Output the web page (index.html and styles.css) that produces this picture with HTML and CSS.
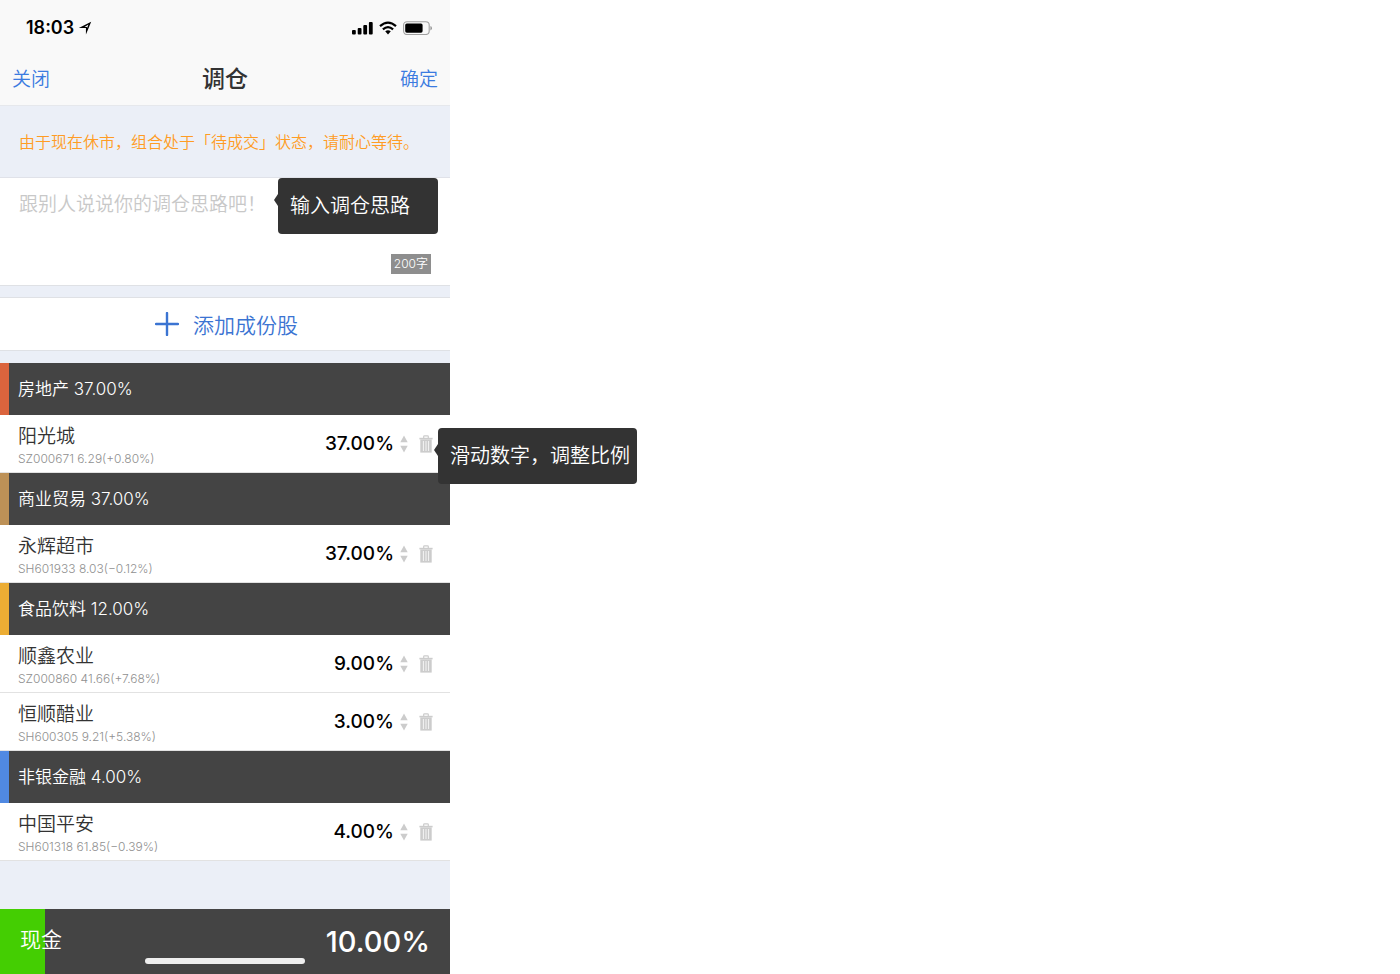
FILE: index.html
```html
<!DOCTYPE html>
<html lang="zh-CN">
<head>
  <meta charset="UTF-8">
  <meta name="viewport" content="width=device-width, initial-scale=1">
  <title>调仓</title>
  <link rel="stylesheet" href="styles.css">
</head>
<body>
  <!-- 图标 -->
  <svg class="symbols" aria-hidden="true">
    <symbol id="icon-sort" viewBox="0 0 8 18">
      <path d="M4 0.5L7.7 7.2H0.3zM4 17.5L0.3 10.8H7.7z" fill="#ccc"/>
    </symbol>
    <symbol id="icon-trash" viewBox="0 0 14 18">
      <path d="M4.7 3V1.6Q4.7 0.8 5.5 0.8H8.5Q9.3 0.8 9.3 1.6V3" fill="none" stroke="#ccc" stroke-width="1.2"/>
      <path d="M0.4 2.8H13.6V4.4H0.4z" fill="#ccc"/>
      <path d="M1.3 4.4H12.7V17.6H1.3z" fill="#ccc"/>
      <path d="M4.4 6V16M7 6V16M9.6 6V16" stroke="#fff" stroke-width="0.8"/>
    </symbol>
  </svg>

  <main class="phone">
    <header class="top">
      <div class="status">
        <span class="time">18:03</span>
        <svg width="14" height="14" viewBox="0 0 12 12" aria-hidden="true">
          <path d="M11.3 0.7L6.8 11.6V6.1H0.7z" fill="#000"/>
          <path d="M8.9 3.1L7.7 6.3V5.1H5.6z" fill="#f9f9f9"/>
        </svg>
        <div class="status-icons" aria-hidden="true">
          <svg width="21" height="14" viewBox="0 0 21 14">
            <rect x="0" y="9" width="3.8" height="4.5" rx="1"/>
            <rect x="5.7" y="7" width="3.8" height="6.5" rx="1"/>
            <rect x="11.3" y="4" width="3.8" height="9.5" rx="1"/>
            <rect x="16.9" y="1" width="3.8" height="12.5" rx="1"/>
          </svg>
          <svg width="18" height="14" viewBox="0 0 18 14">
            <path d="M1 5.2Q9 -1.8 17 5.2M3.9 8.4Q9 3.9 14.1 8.4" fill="none" stroke="#000" stroke-width="2.2"/>
            <path d="M6.2 10.3Q9 8.3 11.8 10.3L9 13.5z"/>
          </svg>
          <svg width="30" height="14" viewBox="0 0 30 14">
            <rect x="0.6" y="0.7" width="25.6" height="12.8" rx="3.4" fill="none" stroke="#a0a0a0" stroke-width="1.1"/>
            <rect x="2.2" y="2.5" width="17.4" height="9.2" rx="1.6"/>
            <path d="M27.4 5V9.4Q29 8.8 29 7.2Q29 5.6 27.4 5z" fill="#999"/>
          </svg>
        </div>
      </div>
      <div class="nav">
        <button type="button" class="nav-btn">关闭</button>
        <h1>调仓</h1>
        <button type="button" class="nav-btn nav-ok">确定</button>
      </div>
    </header>

    <p class="notice">由于现在休市，组合处于「待成交」状态，请耐心等待。</p>

    <section class="idea">
      <textarea class="idea-text" aria-label="调仓思路" placeholder="跟别人说说你的调仓思路吧！"></textarea>
      <span class="count">200字</span>
      <div class="tip tip-idea">输入调仓思路</div>
    </section>

    <button type="button" class="add">
      <svg width="24" height="24" viewBox="0 0 24 24" aria-hidden="true">
        <path d="M12 1V23M1 12H23" stroke="#3b74d2" stroke-width="2.4" stroke-linecap="round"/>
      </svg>
      添加成份股
    </button>

    <section class="group">
      <h2 class="estate">房地产 37.00%</h2>
      <div class="stock">
        <div class="info">
          <label class="name" for="sz000671">阳光城</label>
          <div class="quote">SZ000671 6.29(+0.80%)</div>
        </div>
        <input class="weight" id="sz000671" type="text" value="37.00%">
        <svg class="sort" aria-hidden="true"><use href="#icon-sort"/></svg>
        <button type="button" class="remove" aria-label="删除"><svg class="trash"><use href="#icon-trash"/></svg></button>
        <div class="tip tip-weight">滑动数字，调整比例</div>
      </div>
    </section>

    <section class="group">
      <h2 class="trade">商业贸易 37.00%</h2>
      <div class="stock">
        <div class="info">
          <label class="name" for="sh601933">永辉超市</label>
          <div class="quote">SH601933 8.03(−0.12%)</div>
        </div>
        <input class="weight" id="sh601933" type="text" value="37.00%">
        <svg class="sort" aria-hidden="true"><use href="#icon-sort"/></svg>
        <button type="button" class="remove" aria-label="删除"><svg class="trash"><use href="#icon-trash"/></svg></button>
      </div>
    </section>

    <section class="group">
      <h2 class="food">食品饮料 12.00%</h2>
      <div class="stock">
        <div class="info">
          <label class="name" for="sz000860">顺鑫农业</label>
          <div class="quote">SZ000860 41.66(+7.68%)</div>
        </div>
        <input class="weight" id="sz000860" type="text" value="9.00%">
        <svg class="sort" aria-hidden="true"><use href="#icon-sort"/></svg>
        <button type="button" class="remove" aria-label="删除"><svg class="trash"><use href="#icon-trash"/></svg></button>
      </div>
      <div class="stock">
        <div class="info">
          <label class="name" for="sh600305">恒顺醋业</label>
          <div class="quote">SH600305 9.21(+5.38%)</div>
        </div>
        <input class="weight" id="sh600305" type="text" value="3.00%">
        <svg class="sort" aria-hidden="true"><use href="#icon-sort"/></svg>
        <button type="button" class="remove" aria-label="删除"><svg class="trash"><use href="#icon-trash"/></svg></button>
      </div>
    </section>

    <section class="group">
      <h2 class="finance">非银金融 4.00%</h2>
      <div class="stock">
        <div class="info">
          <label class="name" for="sh601318">中国平安</label>
          <div class="quote">SH601318 61.85(−0.39%)</div>
        </div>
        <input class="weight" id="sh601318" type="text" value="4.00%">
        <svg class="sort" aria-hidden="true"><use href="#icon-sort"/></svg>
        <button type="button" class="remove" aria-label="删除"><svg class="trash"><use href="#icon-trash"/></svg></button>
      </div>
    </section>

    <footer class="cash">
      <div class="cash-bar" style="width: 10%"></div>
      <span class="cash-name">现金</span>
      <span class="cash-value">10.00%</span>
      <div class="home"></div>
    </footer>
  </main>
</body>
</html>
```

FILE: styles.css
```css
* {
  box-sizing: border-box;
}
body {
  margin: 0;
  background: #fff;
  font-family: Inter, "Noto Sans CJK SC", sans-serif;
  font-weight: 350;
  color: #333;
}
button, input, textarea {
  font: inherit;
  padding: 0;
  border: none;
  background: none;
}
button {
  cursor: pointer;
}
h1, h2, p {
  margin: 0;
}
svg {
  display: block;
}
.symbols {
  position: absolute;
  width: 0;
  height: 0;
}
.phone {
  display: flex;
  flex-direction: column;
  max-width: 450px;
  min-height: 100vh;
  background: #ebeff7;
}

/* 顶部栏 */
.top {
  background: #f9f9f9;
  border-bottom: 1px solid #e6e8ec;
}
.status {
  display: flex;
  align-items: center;
  gap: 4px;
  padding: 16px 17px 0 26px;
  line-height: 24px;
}
.time {
  font-size: 18px;
  font-weight: 600;
  color: #000;
}
.status-icons {
  display: flex;
  gap: 6px;
  margin-left: auto;
}
.nav {
  display: grid;
  grid-template-columns: 1fr auto 1fr;
  align-items: center;
  padding: 19px 12px 5px;
  line-height: 41px;
}
.nav-btn {
  font-size: 19px;
  color: #3b7be0;
  text-align: left;
}
.nav-ok {
  text-align: right;
}
h1 {
  font-size: 23px;
  font-weight: 500;
}
.notice {
  padding: 24px 19px 23px;
  font-size: 16px;
  line-height: 24px;
  color: #ff9c24;
  border-bottom: 1px solid #e0e2e9;
}

/* 调仓思路 */
.idea {
  position: relative;
  height: 108px;
  background: #fff;
  border-bottom: 1px solid #dfe1e5;
}
.idea-text {
  display: block;
  width: 100%;
  height: 100%;
  padding: 13px 19px;
  font-size: 19px;
  line-height: 28px;
  resize: none;
  outline: none;
}
.idea-text::placeholder {
  color: #c8c8c8;
}
.count {
  position: absolute;
  right: 19px;
  bottom: 11px;
  padding: 0 3px;
  font-size: 12px;
  line-height: 20px;
  color: #fff;
  background: #8e8e8e;
}
.tip {
  position: absolute;
  z-index: 1;
  height: 56px;
  padding: 0 12px;
  font-size: 20px;
  line-height: 56px;
  white-space: nowrap;
  color: #fff;
  background: #333;
  border-radius: 4px;
}
.tip::before {
  content: "";
  position: absolute;
  left: -4px;
  top: 16px;
  border: solid transparent;
  border-width: 6px 4px 6px 0;
  border-right-color: #333;
}
.tip-idea {
  right: 12px;
  top: 0;
  width: 160px;
}
.tip-weight {
  left: calc(100% - 12px);
  top: 13px;
  width: 199px;
}
.add {
  display: flex;
  align-items: center;
  justify-content: center;
  gap: 14px;
  height: 54px;
  margin: 11px 0 12px;
  padding-left: 3px;
  font-size: 21px;
  color: #3b74d2;
  background: #fff;
  border: solid #dfe1e5;
  border-width: 1px 0;
}

/* 行业和股票 */
h2 {
  padding-left: 9px;
  font-size: 17px;
  font-weight: 350;
  line-height: 52px;
  color: #fff;
  background: #444;
  border-left: 9px solid;
}
.estate {
  border-left-color: #db643d;
}
.trade {
  border-left-color: #bd9157;
}
.food {
  border-left-color: #ecad34;
}
.finance {
  border-left-color: #5089e2;
}
.stock {
  position: relative;
  display: flex;
  align-items: center;
  height: 58px;
  padding: 0 17px 0 18px;
  background: #fff;
  border-bottom: 1px solid #e2e2e2;
}
.info {
  flex: 1;
  padding-top: 5px;
}
.name {
  display: block;
  font-size: 19px;
  line-height: 26px;
}
.quote {
  font-size: 12px;
  line-height: 18px;
  color: #909090;
}
.weight {
  width: 90px;
  font-size: 19px;
  font-weight: 500;
  text-align: right;
  color: #000;
}
.sort {
  width: 8px;
  height: 18px;
  margin: 0 11px 0 6px;
}
.trash {
  width: 14px;
  height: 18px;
}

/* 现金 */
.cash {
  position: relative;
  display: flex;
  align-items: center;
  justify-content: space-between;
  height: 65px;
  margin-top: auto;
  padding: 0 20px;
  line-height: 60px;
  color: #fff;
  background: #444;
}
.cash-bar {
  position: absolute;
  left: 0;
  top: 0;
  height: 100%;
  background: #44ce02;
}
.cash-name {
  position: relative;
  padding-bottom: 4px;
  font-size: 21px;
}
.cash-value {
  font-size: 29px;
  font-weight: 500;
}
.home {
  position: absolute;
  left: 50%;
  bottom: 10px;
  width: 160px;
  height: 6px;
  margin-left: -80px;
  background: #eee;
  border-radius: 3px;
}
```
